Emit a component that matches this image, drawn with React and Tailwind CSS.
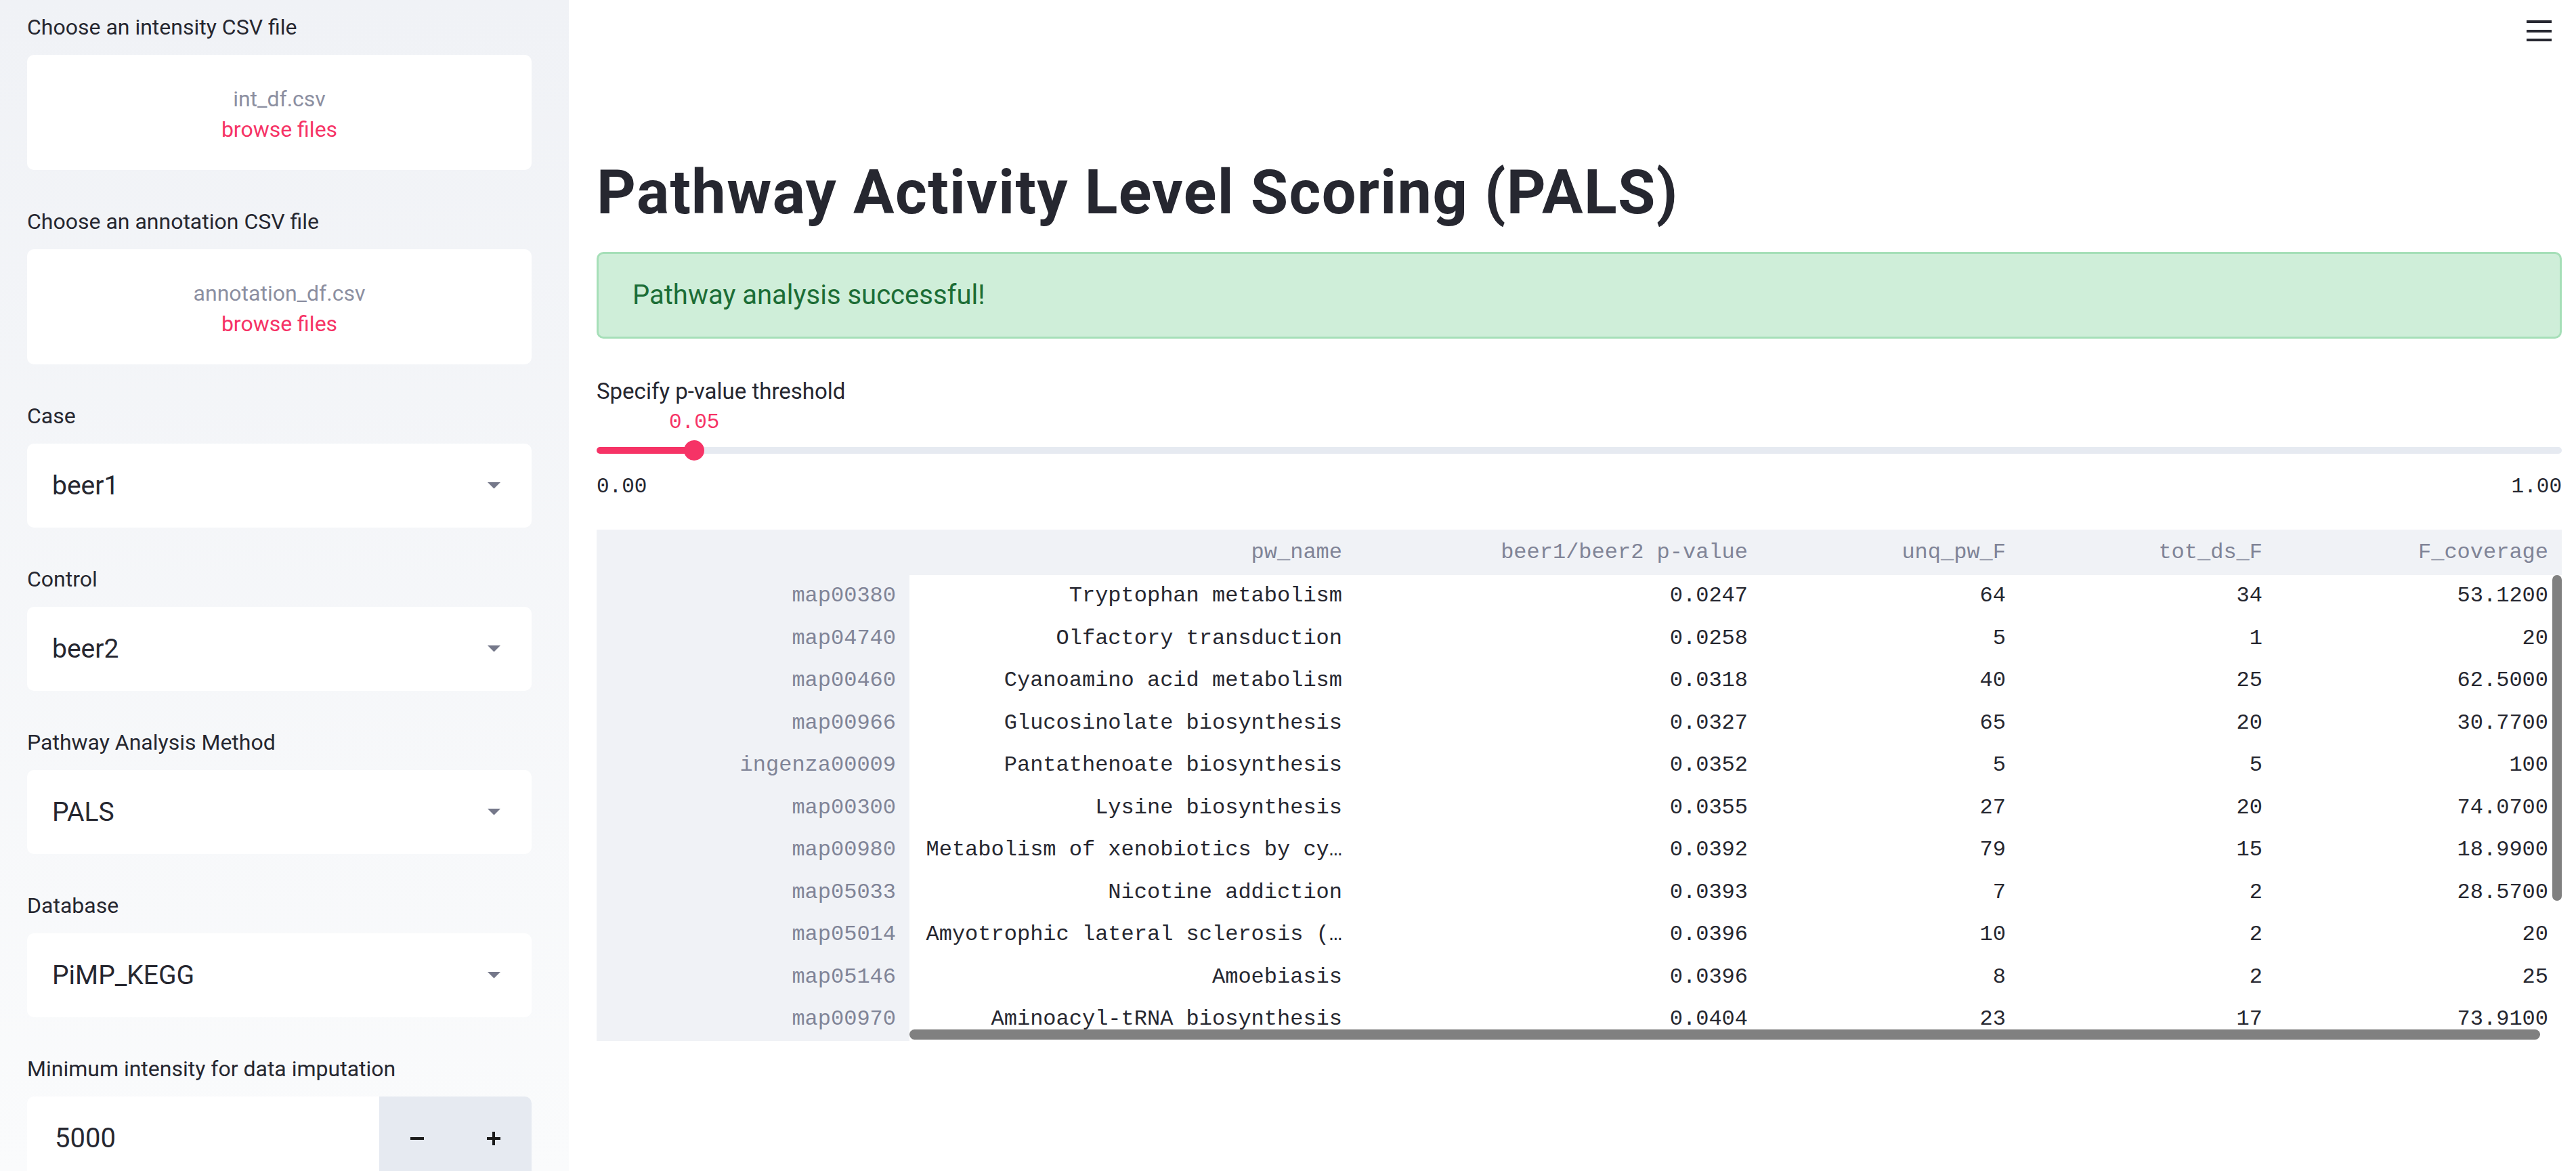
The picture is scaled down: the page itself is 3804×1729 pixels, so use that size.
const rows = [
  ["map00380", "Tryptophan metabolism", "0.0247", "64", "34", "53.1200"],
  ["map04740", "Olfactory transduction", "0.0258", "5", "1", "20"],
  ["map00460", "Cyanoamino acid metabolism", "0.0318", "40", "25", "62.5000"],
  ["map00966", "Glucosinolate biosynthesis", "0.0327", "65", "20", "30.7700"],
  ["ingenza00009", "Pantathenoate biosynthesis", "0.0352", "5", "5", "100"],
  ["map00300", "Lysine biosynthesis", "0.0355", "27", "20", "74.0700"],
  ["map00980", "Metabolism of xenobiotics by cy\u2026", "0.0392", "79", "15", "18.9900"],
  ["map05033", "Nicotine addiction", "0.0393", "7", "2", "28.5700"],
  ["map05014", "Amyotrophic lateral sclerosis (\u2026", "0.0396", "10", "2", "20"],
  ["map05146", "Amoebiasis", "0.0396", "8", "2", "25"],
  ["map00970", "Aminoacyl-tRNA biosynthesis", "0.0404", "23", "17", "73.9100"],
];

const headers = ["", "pw_name", "beer1/beer2 p-value", "unq_pw_F", "tot_ds_F", "F_coverage"];

function Field({ label, children }) {
  return (
    <div className="flex flex-col">
      <div className="h-[54px] flex items-center text-[32px] text-[#262730]">{label}</div>
      <div className="mt-[14px]">{children}</div>
    </div>
  );
}

function Dropzone({ name }) {
  return (
    <div className="w-[745px] h-[170px] bg-white rounded-[10px] flex flex-col items-center justify-center pt-[6px] text-[32px] leading-[45px]">
      <div className="text-[#8c8fa1]">{name}</div>
      <div className="text-[#f63366]">browse files</div>
    </div>
  );
}

function Select({ value }) {
  return (
    <div className="w-[745px] h-[124px] bg-white rounded-[10px] flex items-center justify-between pl-[37px] pr-[46px]">
      <span className="text-[39px] text-[#262730]">{value}</span>
      <svg width="19" height="10" viewBox="0 0 19 10">
        <polygon points="0,0 19,0 9.5,9.5" fill="#75788a" />
      </svg>
    </div>
  );
}

export default function App() {
  return (
    <div className="flex h-[1729px] w-full overflow-hidden bg-white font-['Roboto','Noto_Sans',sans-serif]">
      <aside className="w-[840px] shrink-0 h-full bg-linear-to-b from-[#f0f2f6] to-[#fafbfc] pl-[40px] pt-[13px] flex flex-col gap-[49px]">
        <Field label="Choose an intensity CSV file">
          <Dropzone name="int_df.csv" />
        </Field>
        <Field label="Choose an annotation CSV file">
          <Dropzone name="annotation_df.csv" />
        </Field>
        <Field label="Case">
          <Select value="beer1" />
        </Field>
        <Field label="Control">
          <Select value="beer2" />
        </Field>
        <Field label="Pathway Analysis Method">
          <Select value="PALS" />
        </Field>
        <Field label="Database">
          <Select value="PiMP_KEGG" />
        </Field>
        <Field label="Minimum intensity for data imputation">
          <div className="w-[745px] h-[124px] flex">
            <div className="flex-1 bg-white rounded-l-[10px] flex items-center pl-[41px] text-[40px] text-[#262730]">5000</div>
            <div className="w-[225px] bg-[#e6eaf1] rounded-r-[10px] flex">
              <div className="flex-1 flex items-center justify-center">
                <svg width="20" height="20" viewBox="0 0 20 20">
                  <line x1="0" y1="10" x2="20" y2="10" stroke="#1a1a1a" strokeWidth="4" />
                </svg>
              </div>
              <div className="flex-1 flex items-center justify-center">
                <svg width="20" height="20" viewBox="0 0 20 20">
                  <line x1="0" y1="10" x2="20" y2="10" stroke="#1a1a1a" strokeWidth="4" />
                  <line x1="10" y1="0" x2="10" y2="20" stroke="#1a1a1a" strokeWidth="4" />
                </svg>
              </div>
            </div>
          </div>
        </Field>
      </aside>

      <main className="relative flex-1 h-full pl-[41px] pr-[21px] pt-[235px]">
        <div className="absolute right-[36px] top-[30px] flex flex-col gap-[9.5px]">
          <div className="w-[37px] h-[4px] bg-[#262730]" />
          <div className="w-[37px] h-[4px] bg-[#262730]" />
          <div className="w-[37px] h-[4px] bg-[#262730]" />
        </div>

        <h1 className="h-[100px] flex items-center text-[90px] font-bold text-[#262730] leading-none tracking-[1.4px]">
          Pathway Activity Level Scoring (PALS)
        </h1>

        <div className="mt-[37px] h-[128px] rounded-[10px] border-[3px] border-[#a6dfb8] bg-[#cfeed9] flex items-center pl-[50px] text-[40px] text-[#1c6d36]">
          Pathway analysis successful!
        </div>

        <div className="mt-[53px]">
          <div className="h-[50px] flex items-center text-[33px] text-[#262730]">Specify p-value threshold</div>
          <div className="relative h-[38px]">
            <span className="absolute left-[107px] top-[2px] h-[38px] flex items-center font-['Liberation_Mono',monospace] text-[31px] text-[#f63366]">0.05</span>
          </div>
          <div className="relative h-[48px] flex items-center">
            <div className="w-full h-[10px] rounded-full bg-[#e6eaf1] overflow-hidden">
              <div className="w-[145px] h-full bg-[#f63366]" />
            </div>
            <div className="absolute left-[129px] top-[9px] w-[30px] h-[30px] rounded-full bg-[#f63366]" />
          </div>
          <div className="h-[56px] pt-[4px] flex items-center justify-between font-['Liberation_Mono',monospace] text-[31px] text-[#262730]">
            <span>0.00</span>
            <span>1.00</span>
          </div>
        </div>

        <div className="mt-[37px] font-['Liberation_Mono',monospace] text-[32px]">
          <div className="grid grid-cols-[462px_659px_599px_381px_379px_422px] h-[67px] bg-[#f0f2f6] text-[#808497]">
            {headers.map((h, i) => (
              <div key={i} className="flex items-center justify-end pr-[20px] whitespace-nowrap">{h}</div>
            ))}
          </div>
          <div className="relative h-[688px] overflow-hidden">
            {rows.map((r, ri) => (
              <div key={ri} className="grid grid-cols-[462px_659px_599px_381px_379px_422px] h-[62.5px]">
                {r.map((c, ci) => (
                  <div
                    key={ci}
                    className={
                      ci === 0
                        ? "bg-[#f0f2f6] text-[#808497] flex items-center justify-end pr-[20px] whitespace-nowrap"
                        : "bg-white text-[#262730] flex items-center justify-end pr-[20px] whitespace-nowrap overflow-hidden"
                    }
                  >
                    {c}
                  </div>
                ))}
              </div>
            ))}
            <div className="absolute right-0 top-0 w-[14px] h-[481px] rounded-full bg-[#808080]" />
            <div className="absolute left-[462px] bottom-[2px] w-[2408px] h-[15px] rounded-full bg-[#808080]" />
          </div>
        </div>
      </main>
    </div>
  );
}
